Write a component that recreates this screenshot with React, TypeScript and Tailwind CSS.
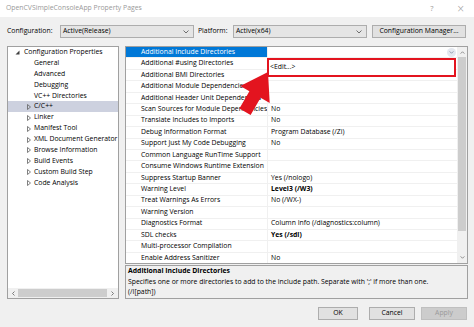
import React from "react";

type Row = { name: string; value: string; bold?: boolean };

const rows: Row[] = [
  { name: "Additional Include Directories", value: "" },
  { name: "Additional #using Directories", value: "" },
  { name: "Additional BMI Directories", value: "" },
  { name: "Additional Module Dependencies", value: "" },
  { name: "Additional Header Unit Dependencies", value: "" },
  { name: "Scan Sources for Module Dependencies", value: "No" },
  { name: "Translate Includes to Imports", value: "No" },
  { name: "Debug Information Format", value: "Program Database (/Zi)" },
  { name: "Support Just My Code Debugging", value: "No" },
  { name: "Common Language RunTime Support", value: "" },
  { name: "Consume Windows Runtime Extension", value: "" },
  { name: "Suppress Startup Banner", value: "Yes (/nologo)" },
  { name: "Warning Level", value: "Level3 (/W3)", bold: true },
  { name: "Treat Warnings As Errors", value: "No (/WX-)" },
  { name: "Warning Version", value: "" },
  { name: "Diagnostics Format", value: "Column Info (/diagnostics:column)" },
  { name: "SDL checks", value: "Yes (/sdl)", bold: true },
  { name: "Multi-processor Compilation", value: "" },
  { name: "Enable Address Sanitizer", value: "No" },
];

const treeItems: { label: string; expander: boolean; selected?: boolean }[] = [
  { label: "General", expander: false },
  { label: "Advanced", expander: false },
  { label: "Debugging", expander: false },
  { label: "VC++ Directories", expander: false },
  { label: "C/C++", expander: true, selected: true },
  { label: "Linker", expander: true },
  { label: "Manifest Tool", expander: true },
  { label: "XML Document Generator", expander: true },
  { label: "Browse Information", expander: true },
  { label: "Build Events", expander: true },
  { label: "Custom Build Step", expander: true },
  { label: "Code Analysis", expander: true },
];

function Chevron({ color = "#606060", up = false, w = 6, h = 4 }: { color?: string; up?: boolean; w?: number; h?: number }) {
  return (
    <svg width={w} height={h} viewBox="0 0 6 4" className="block">
      <polyline
        points={up ? "0.5,3.5 3,1 5.5,3.5" : "0.5,0.5 3,3 5.5,0.5"}
        fill="none"
        stroke={color}
        strokeWidth="0.9"
      />
    </svg>
  );
}

function Combo({ text, width }: { text: string; width: string }) {
  return (
    <div className={`${width} h-[13px] bg-[#e5e5e5] border border-[#adadad] flex items-center justify-between pl-[2px] pr-[4px]`}>
      <span className="leading-none">{text}</span>
      <Chevron />
    </div>
  );
}

function Button({ label, width, disabled }: { label: string; width: string; disabled?: boolean }) {
  return (
    <div
      className={`${width} h-[13px] flex items-center justify-center border ${
        disabled ? "bg-[#cccccc] border-[#bfbfbf] text-[#9a9a9a]" : "bg-[#e1e1e1] border-[#adadad] text-black"
      }`}
    >
      <span className="leading-none">{label}</span>
    </div>
  );
}

export default function App() {
  return (
    <div className="relative w-[474px] h-[327px] overflow-hidden bg-[#f0f0f0] text-black font-['Open_Sans',sans-serif] text-[6.85px]">
      {/* Title bar */}
      <div className="h-[17px] bg-white flex items-center pl-[6px] text-[#9a9a9a]">
        <span className="leading-none">OpenCVSimpleConsoleApp Property Pages</span>
        <span className="ml-auto mr-[23px] text-[7.5px] leading-none">?</span>
        <span className="mr-[9px] text-[10px] leading-none font-['DejaVu_Sans',sans-serif] font-light">×</span>
      </div>

      {/* Configuration row */}
      <div className="mt-[8px] h-[13px] flex items-center pl-[7px]">
        <span className="w-[53px] leading-none">Configuration:</span>
        <Combo text="Active(Release)" width="w-[134px]" />
        <span className="ml-[4px] w-[35px] leading-none">Platform:</span>
        <Combo text="Active(x64)" width="w-[134px]" />
        <div className="ml-[5px] w-[94px] h-[13px] bg-[#e1e1e1] border border-[#adadad] flex items-center justify-center">
          <span className="leading-none">Configuration Manager...</span>
        </div>
      </div>

      {/* Main area */}
      <div className="mt-[8px] h-[253px] flex pl-[7px]">
        {/* Tree */}
        <div className="w-[112px] h-full bg-white border border-[#a0a0a0] flex flex-col">
          <div className="flex-1 overflow-hidden">
            <div className="h-[10.9px] flex items-center">
              <svg width="5" height="5" viewBox="0 0 5 5" className="ml-[7px] mr-[4px] block">
                <polygon points="4.5,0.5 4.5,4.5 0.5,4.5" fill="#404040" />
              </svg>
              <span className="leading-none whitespace-nowrap">Configuration Properties</span>
            </div>
            {treeItems.map((t) => (
              <div
                key={t.label}
                className={`h-[10.9px] flex items-center whitespace-nowrap ${t.selected ? "bg-[#cdd1df]" : ""}`}
              >
                <div className="w-[26px] flex justify-end pr-[3px]">
                  {t.expander && (
                    <svg width="4" height="6" viewBox="0 0 4 6" className="block">
                      <polygon points="0.5,0.5 3.5,3 0.5,5.5" fill="none" stroke="#606060" strokeWidth="0.8" />
                    </svg>
                  )}
                </div>
                <span className="leading-none">{t.label}</span>
              </div>
            ))}
          </div>
          {/* Horizontal scrollbar */}
          <div className="h-[10px] bg-[#f0f0f0] flex items-center">
            <div className="w-[10px] flex justify-center">
              <svg width="3" height="5" viewBox="0 0 3 5" className="block">
                <polyline points="2.5,0.5 0.5,2.5 2.5,4.5" fill="none" stroke="#606060" strokeWidth="0.8" />
              </svg>
            </div>
            <div className="w-[89px] h-[8px] bg-[#cdcdcd]" />
            <div className="flex-1 flex justify-center">
              <svg width="3" height="5" viewBox="0 0 3 5" className="block">
                <polyline points="0.5,0.5 2.5,2.5 0.5,4.5" fill="none" stroke="#606060" strokeWidth="0.8" />
              </svg>
            </div>
          </div>
        </div>

        {/* Right column */}
        <div className="ml-[6px] w-[343px] h-full flex flex-col">
          {/* Property grid */}
          <div className="h-[218px] bg-white border border-[#a0a0a0] flex overflow-hidden">
            <div className="flex-1 overflow-hidden">
              {rows.map((r, i) => (
                <div key={r.name} className="h-[11.44px] flex border-b border-[#f0f0f0]">
                  <div
                    className={`w-[141px] shrink-0 flex items-center pl-[15px] overflow-hidden whitespace-nowrap ${
                      i === 0 ? "bg-[#0078d7] text-white" : ""
                    }`}
                  >
                    <span className="leading-none">{r.name}</span>
                  </div>
                  <div className="flex-1 flex items-center pl-[3px] border-l border-[#f0f0f0] whitespace-nowrap overflow-hidden">
                    <span className={`leading-none ${r.bold ? "font-bold" : ""}`}>{r.value}</span>
                    {i === 0 && (
                      <div className="ml-auto mr-[1px] w-[9px] h-[9px] rounded-full bg-[#e4e8ef] flex items-center justify-center">
                        <Chevron color="#6b7a90" w={5} h={3} />
                      </div>
                    )}
                  </div>
                </div>
              ))}
            </div>
            {/* Vertical scrollbar */}
            <div className="w-[10px] shrink-0 bg-[#f0f0f0] flex flex-col">
              <div className="h-[10px] flex items-center justify-center">
                <Chevron up w={5} h={3} />
              </div>
              <div className="h-[174px] mx-[1px] bg-[#cdcdcd]" />
              <div className="flex-1 flex items-end justify-center pb-[4px]">
                <Chevron w={5} h={3} />
              </div>
            </div>
          </div>

          {/* Description */}
          <div className="mt-[1px] flex-1 border border-[#a0a0a0] bg-[#f0f0f0] pl-[2px] pt-[1px]">
            <div className="h-[10.5px] flex items-center font-bold">
              <span className="leading-none">Additional Include Directories</span>
            </div>
            <div className="h-[10.5px] flex items-center">
              <span className="leading-none">
                Specifies one or more directories to add to the include path. Separate with ';' if more than one.
              </span>
            </div>
            <div className="h-[10.5px] flex items-center">
              <span className="leading-none">(/I[path])</span>
            </div>
          </div>
        </div>
      </div>

      {/* Buttons */}
      <div className="mt-[8px] h-[13px] flex pl-[318px]">
        <Button label="OK" width="w-[40px]" />
        <div className="ml-[11px]">
          <Button label="Cancel" width="w-[46px]" />
        </div>
        <div className="ml-[6px]">
          <Button label="Apply" width="w-[46px]" disabled />
        </div>
      </div>

      {/* Dropdown list with red annotation box */}
      <div className="absolute left-[267px] top-[58px] w-[189px] h-[19px] bg-white border-2 border-[#e3141f] flex items-start pl-[1px] pt-[2px]">
        <span className="leading-[10px]">&lt;Edit...&gt;</span>
      </div>

      {/* Red annotation arrow */}
      <svg className="absolute left-0 top-0 pointer-events-none" width="474" height="327" viewBox="0 0 474 327">
        <polygon
          points="268,72 269.7,103 260.6,97.8 250.6,115 239.4,108.6 249.4,91.3 240.3,86"
          fill="#e3141f"
        />
      </svg>
    </div>
  );
}
